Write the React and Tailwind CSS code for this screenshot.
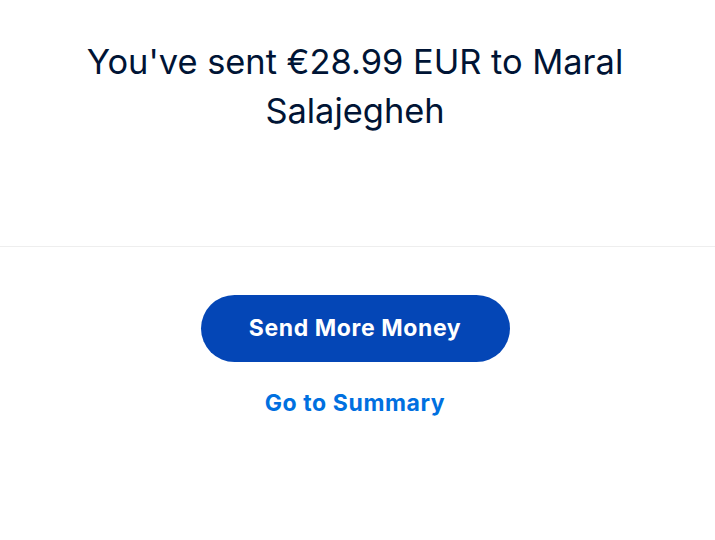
export default function App() {
  return (
    <div className="min-h-[540px] w-[715px] bg-white font-['Inter','Liberation_Sans',sans-serif]">
      <div className="w-[710px] flex flex-col items-center">
        <h1 className="mt-[37px] w-[560px] text-center text-[34.4px] leading-[49px] font-normal text-[#001435]">
          You've sent €28.99 EUR to Maral Salajegheh
        </h1>
      </div>
      <div className="mt-[111px] h-px w-full bg-[#eeeeee]" />
      <div className="w-[710px] flex flex-col items-center">
        <button className="mt-[48px] h-[67px] w-[309px] rounded-full bg-[#0446b6] text-[23px] font-bold tracking-[0.6px] text-white">
          Send More Money
        </button>
        <a href="#" className="mt-[26px] text-[23px] font-bold leading-[30px] tracking-[0.6px] text-[#0070e0]">
          Go to Summary
        </a>
      </div>
    </div>
  );
}
